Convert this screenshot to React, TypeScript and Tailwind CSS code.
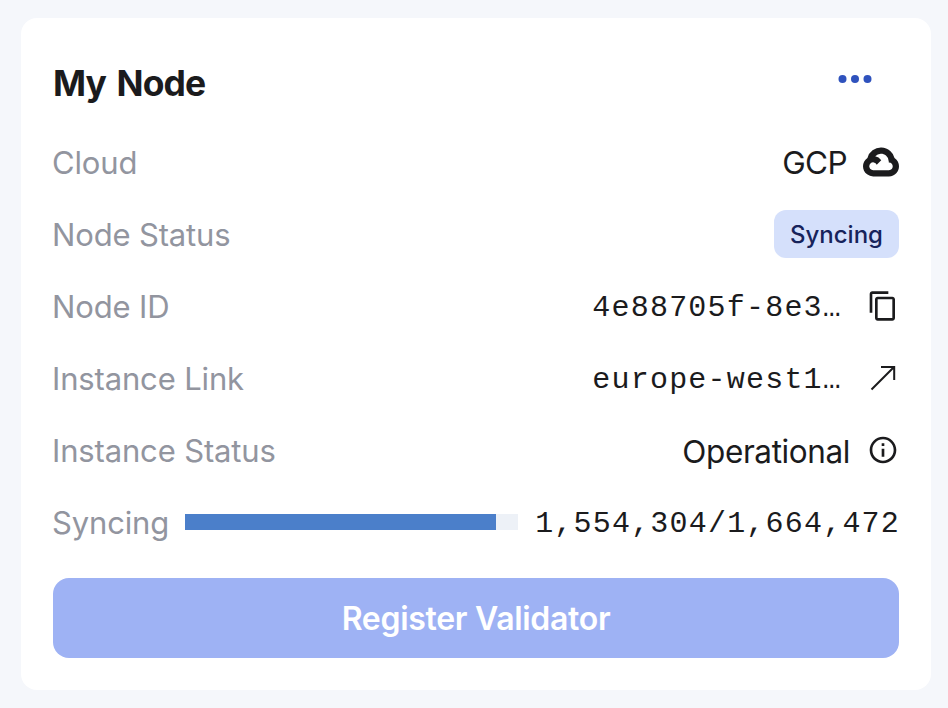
import React from "react";
import { MdContentCopy, MdInfoOutline } from "react-icons/md";
import { SiGooglecloud } from "react-icons/si";

const mono = "pt-0.5 font-['Liberation_Mono',monospace] text-[30px] tracking-[1.2px]";

function Label({ children }: { children: React.ReactNode }) {
  return <span className="-ml-px pt-px text-[31px] tracking-[-0.15px] text-[#92959f]">{children}</span>;
}

function Row({ label, children }: { label: string; children: React.ReactNode }) {
  return (
    <div className="flex h-[72px] items-center justify-between">
      <Label>{label}</Label>
      <div className="flex items-center">{children}</div>
    </div>
  );
}

export default function App() {
  const progress = (1554304 / 1664472) * 100;
  return (
    <main className="h-[708px] w-[948px] overflow-hidden bg-[#f5f7fb] pt-[18px] pl-[21px] font-['Inter',sans-serif] text-[#1b1b1d]">
      <section className="h-[672px] w-[910px] rounded-2xl bg-white px-8 pt-[38px]">
        <header className="flex h-[54px] items-center justify-between">
          <h1 className="pt-px text-[35.5px] font-bold tracking-[-0.9px] [word-spacing:3px]">My Node</h1>
          <svg className="mr-[26px] mb-2" width="36" height="10" viewBox="0 0 36 10" fill="#2f52bd">
            <circle cx="5.5" cy="5" r="4" />
            <circle cx="18" cy="5" r="4" />
            <circle cx="30.5" cy="5" r="4" />
          </svg>
        </header>
        <div className="pt-[17px]">
          <Row label="Cloud">
            <span className="mr-4 text-[31.5px] tracking-[-0.6px]">GCP</span>
            <SiGooglecloud className="mb-0.5" size={36} />
          </Row>
          <Row label="Node Status">
            <span className="mb-0.5 flex h-12 w-[125px] items-center justify-center rounded-xl bg-[#d5e0fb] pt-0.5 text-[24px] font-medium text-[#17235b]">
              Syncing
            </span>
          </Row>
          <Row label="Node ID">
            <span className={mono}>4e88705f-8e3…</span>
            <MdContentCopy className="ml-[25px] mb-0.5" size={32} />
          </Row>
          <Row label="Instance Link">
            <span className={mono}>europe-west1…</span>
            <svg className="ml-[25px] mb-0.5" width="32" height="32" viewBox="0 0 32 32" fill="none" stroke="currentColor" strokeWidth="2">
              <path d="M4.5 27.5 27 5M14 5h13.2v13" />
            </svg>
          </Row>
          <Row label="Instance Status">
            <span className="pt-px text-[31.5px] tracking-[-0.4px]">Operational</span>
            <MdInfoOutline className="ml-[17px] mb-0.5" size={32} />
          </Row>
          <div className="flex h-[72px] items-center">
            <div className="flex w-[132px]"><Label>Syncing</Label></div>
            <div className="mb-0.5 h-4 w-[333px] bg-[#edf1f7]">
              <div className="h-full bg-[#4b7fca]" style={{ width: `${progress}%` }} />
            </div>
            <span className={`-mr-px ml-auto ${mono}`}>1,554,304/1,664,472</span>
          </div>
        </div>
        <button className="mt-[19px] flex h-20 w-full items-center justify-center rounded-2xl bg-[#9eb2f4] pt-0.5 text-[32px] font-semibold tracking-[-0.3px] text-white">
          Register Validator
        </button>
      </section>
    </main>
  );
}
